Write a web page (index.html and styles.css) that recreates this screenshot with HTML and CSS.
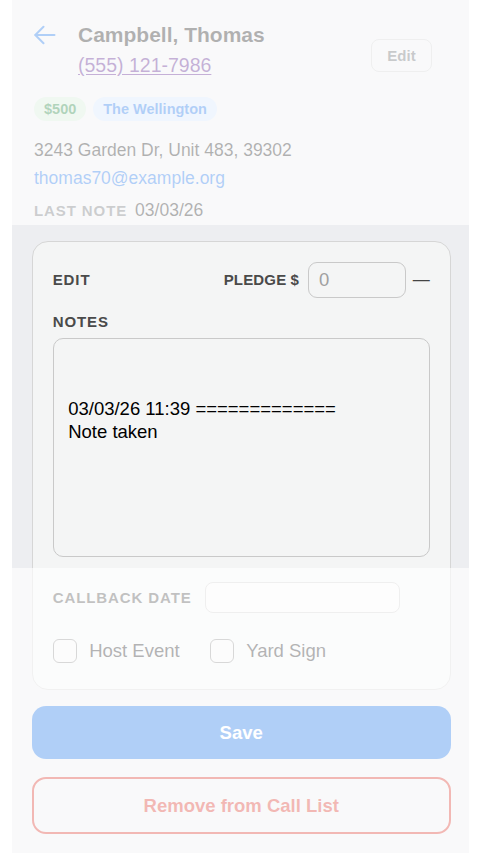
FILE: index.html
```html
<!DOCTYPE html>
<html lang="en">
<head>
<meta charset="utf-8">
<title>Campbell, Thomas</title>
<link rel="stylesheet" href="styles.css">
</head>
<body>
<div class="app">
  <header class="contact">
    <div class="top">
      <button class="back" aria-label="Back">
        <svg width="22" height="22" viewBox="0 0 22 22" fill="none" stroke="#1a73e8" stroke-width="2" stroke-linecap="round" stroke-linejoin="round"><path d="M20.5 11H1.5"/><path d="M9.5 2.8L1.3 11l8.2 8.2"/></svg>
      </button>
      <div class="ident">
        <h1 class="name">Campbell, Thomas</h1>
        <a class="phone" href="#">(555) 121-7986</a>
      </div>
      <button class="edit-btn">Edit</button>
    </div>
    <div class="chips">
      <span class="chip chip-green">$500</span>
      <span class="chip chip-blue">The Wellington</span>
    </div>
    <div class="address">3243 Garden Dr, Unit 483, 39302</div>
    <a class="email" href="#">thomas70@example.org</a>
    <div class="last-note"><span class="label">LAST NOTE</span><span class="last-date">03/03/26</span></div>
  </header>

  <main class="body">
    <section class="card">
      <div class="card-head">
        <span class="label">EDIT</span>
        <div class="pledge">
          <label class="label label-tight" for="pledge">PLEDGE $</label>
          <input id="pledge" class="pledge-input" type="text" placeholder="0">
          <span class="dash">—</span>
        </div>
      </div>
      <div class="label notes-label">NOTES</div>
      <textarea class="notes">


03/03/26 11:39 =============
Note taken</textarea>
      <div class="callback">
        <span class="label">CALLBACK DATE</span>
        <input class="callback-input" type="text">
      </div>
      <div class="checks">
        <label class="check"><span class="box"></span><span class="check-text">Host Event</span></label>
        <label class="check"><span class="box"></span><span class="check-text">Yard Sign</span></label>
      </div>
    </section>
    <button class="save">Save</button>
    <button class="remove">Remove from Call List</button>
  </main>

  <div class="shade shade-top"></div>
  <div class="shade shade-bottom"></div>
</div>
</body>
</html>
```

FILE: styles.css
```css
html, body {
  margin: 0;
  padding: 0;
  background: #ffffff;
}

.app {
  position: relative;
  width: 457px;
  margin-left: 12px;
  min-height: 853px;
  background: #edeef1;
  font-family: "Liberation Sans", Arial, Helvetica, sans-serif;
  color: #202124;
}

button, input, textarea {
  font-family: inherit;
}

/* ---------- contact header ---------- */
.contact {
  padding: 22.5px 37px 1px 22px;
}

.top {
  display: flex;
  align-items: flex-start;
}

.back {
  width: 22px;
  height: 24px;
  padding: 0;
  margin: 0 22px 0 0;
  border: 0;
  background: none;
  display: flex;
  align-items: center;
}

.ident {
  display: flex;
  flex-direction: column;
  align-items: flex-start;
}

.name {
  margin: 0 0 7.5px;
  font-size: 21px;
  line-height: 24px;
  font-weight: 700;
  color: #1a1a1a;
}

.phone {
  font-size: 19.5px;
  line-height: 22.5px;
  color: #551a8b;
  text-decoration: underline;
  text-underline-offset: 2px;
}

.edit-btn {
  margin-left: auto;
  margin-top: 16.5px;
  height: 33px;
  width: 61px;
  padding: 0;
  border: 1px solid #cfcfcf;
  border-radius: 8px;
  background: transparent;
  font-size: 15px;
  font-weight: 700;
  color: #5f6368;
}

.chips {
  display: flex;
  gap: 7px;
  margin-top: 20.5px;
}

.chip {
  height: 24px;
  line-height: 24px;
  padding: 0 10px;
  border-radius: 12px;
  font-size: 14.5px;
  font-weight: 700;
}

.chip-green {
  background: #d3e9d7;
  color: #188038;
}

.chip-blue {
  background: #d2e3fc;
  color: #1a73e8;
}

.address {
  margin-top: 14.5px;
  font-size: 17.5px;
  line-height: 28.5px;
  color: #1a1a1a;
}

.email {
  display: block;
  font-size: 17.5px;
  line-height: 28.5px;
  color: #1a73e8;
  text-decoration: none;
}

.last-note {
  display: flex;
  align-items: baseline;
  gap: 8px;
  margin-top: 3px;
  line-height: 28.5px;
}

.last-note .label {
  color: #6b6e72;
}

.last-date {
  font-size: 17.5px;
  color: #1a1a1a;
}

.label {
  font-size: 15px;
  font-weight: 700;
  letter-spacing: 0.9px;
  color: #4a4a4a;
}

.label-tight {
  letter-spacing: 0.15px;
}

/* ---------- body ---------- */
.body {
  padding: 15px 18.3px 0 19.7px;
}

.card {
  background: #f4f5f5;
  border: 1px solid #d6d6d6;
  border-radius: 16px;
  padding: 19.7px 20px 26px;
}

.card-head {
  display: flex;
  justify-content: space-between;
  align-items: center;
  height: 36.6px;
}

.pledge {
  display: flex;
  align-items: center;
}

.pledge-input {
  box-sizing: border-box;
  width: 97.6px;
  height: 36.6px;
  margin-left: 9px;
  padding: 0 10px;
  border: 1px solid #c9c9c9;
  border-radius: 9px;
  background: transparent;
  font-size: 18.5px;
  color: #202124;
  outline: none;
}

.pledge-input::placeholder {
  color: #a0a0a0;
}

.dash {
  margin-left: 7px;
  font-size: 17px;
  color: #444;
}

.notes-label {
  display: block;
  margin-top: 15px;
  line-height: 17px;
}

.notes {
  display: block;
  box-sizing: border-box;
  width: 100%;
  height: 218.4px;
  margin-top: 8px;
  padding: 11px 14.5px;
  border: 1px solid #c9c9c9;
  border-radius: 10px;
  background: transparent;
  font-size: 18.5px;
  line-height: 23.3px;
  color: #000;
  resize: none;
  outline: none;
}

.callback {
  display: flex;
  align-items: center;
  margin-top: 25px;
}

.callback-input {
  box-sizing: border-box;
  width: 195px;
  height: 31.6px;
  margin-left: 13px;
  border: 1px solid #cfcfcf;
  border-radius: 8px;
  background: #fafafa;
  outline: none;
}

.checks {
  display: flex;
  align-items: center;
  margin-top: 25.7px;
  gap: 30px;
}

.check {
  display: flex;
  align-items: center;
}

.box {
  box-sizing: border-box;
  width: 24px;
  height: 24px;
  border: 1.5px solid #8c8c8c;
  border-radius: 6px;
  background: #f7f7f7;
}

.check-text {
  margin-left: 12.5px;
  font-size: 18.5px;
  line-height: 24px;
  color: #202124;
}

.save {
  display: block;
  width: 100%;
  height: 53.3px;
  margin-top: 16px;
  border: 0;
  border-radius: 14px;
  background: #1a73e8;
  color: #fff;
  font-size: 18.5px;
  font-weight: 700;
}

.remove {
  display: block;
  width: 100%;
  height: 56.7px;
  margin-top: 18px;
  border: 2px solid #d93025;
  border-radius: 14px;
  background: transparent;
  color: #d93025;
  font-size: 18.5px;
  font-weight: 700;
}

/* ---------- dim overlays ---------- */
.shade {
  position: absolute;
  left: 0;
  right: 0;
  background: rgba(255, 255, 255, 0.66);
  pointer-events: none;
}

.shade-top {
  top: 0;
  height: 225px;
}

.shade-bottom {
  top: 568px;
  bottom: 0;
}
```
